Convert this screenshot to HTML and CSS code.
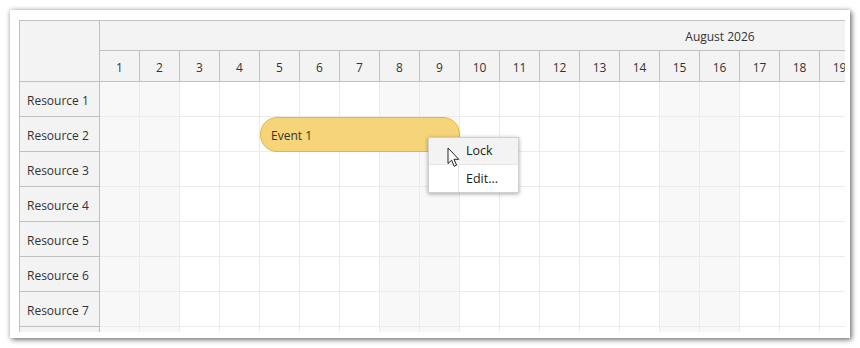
FILE: index.html
```html
<!DOCTYPE html>
<html>
<head>
<meta charset="utf-8">
<link rel="stylesheet" href="styles.css">
</head>
<body>
<div class="card">
  <div class="scheduler">
    <div class="left">
      <div class="corner"></div>
      <div class="res">Resource 1</div>
      <div class="res">Resource 2</div>
      <div class="res">Resource 3</div>
      <div class="res">Resource 4</div>
      <div class="res">Resource 5</div>
      <div class="res">Resource 6</div>
      <div class="res">Resource 7</div>
      <div class="res">Resource 8</div>
    </div>
    <div class="main">
      <div class="month"><span>August 2026</span></div>
      <div class="days">
        <div class="day">1</div><div class="day">2</div><div class="day">3</div><div class="day">4</div><div class="day">5</div><div class="day">6</div><div class="day">7</div><div class="day">8</div><div class="day">9</div><div class="day">10</div><div class="day">11</div><div class="day">12</div><div class="day">13</div><div class="day">14</div><div class="day">15</div><div class="day">16</div><div class="day">17</div><div class="day">18</div><div class="day">19</div><div class="day">20</div><div class="day">21</div><div class="day">22</div><div class="day">23</div><div class="day">24</div><div class="day">25</div><div class="day">26</div><div class="day">27</div><div class="day">28</div><div class="day">29</div><div class="day">30</div><div class="day">31</div>
      </div>
      <div class="canvas">
        <div class="col we"></div><div class="col we"></div><div class="col"></div><div class="col"></div><div class="col"></div><div class="col"></div><div class="col"></div><div class="col we"></div><div class="col we"></div><div class="col"></div><div class="col"></div><div class="col"></div><div class="col"></div><div class="col"></div><div class="col we"></div><div class="col we"></div><div class="col"></div><div class="col"></div><div class="col"></div><div class="col"></div><div class="col"></div><div class="col we"></div><div class="col we"></div><div class="col"></div><div class="col"></div><div class="col"></div><div class="col"></div><div class="col"></div><div class="col we"></div><div class="col we"></div><div class="col"></div>
        <div class="event">Event 1</div>
      </div>
    </div>
  </div>
</div>
<div class="menu">
  <div class="item hover"><span class="icon"></span><span class="label">Lock</span></div>
  <div class="item"><span class="icon"></span><span class="label">Edit...</span></div>
</div>
<svg class="cursor" width="14" height="21" viewBox="0 0 14 21">
  <path d="M1 1 L1 16.5 L4.6 13.2 L7.2 19.2 L9.6 18.2 L7 12.3 L11.8 12.3 Z" fill="#fff" stroke="#222" stroke-width="1" stroke-linejoin="round"/>
</svg>
</body>
</html>
```
FILE: styles.css
```css
html, body {
  margin: 0;
  padding: 0;
  background: #fff;
}
body {
  position: relative;
  width: 860px;
  height: 348px;
  overflow: hidden;
  font-family: "Open Sans", "Noto Sans", sans-serif;
  font-size: 12px;
  color: #333;
}
.card {
  position: absolute;
  left: 10px;
  top: 10px;
  width: 840px;
  height: 328px;
  box-sizing: border-box;
  padding: 10px 5px 6px 9px;
  background: #fff;
  box-shadow: 2px 2px 5px rgba(0,0,0,0.45), 0 0 5px rgba(0,0,0,0.25);
}
.scheduler {
  display: flex;
  width: 826px;
  height: 312px;
  box-sizing: border-box;
  border-left: 1px solid #c0c0c0;
  border-top: 1px solid #c0c0c0;
  overflow: hidden;
}
.left {
  flex: 0 0 80px;
  display: flex;
  flex-direction: column;
  background: #f3f3f3;
}
.corner {
  flex: 0 0 61px;
  box-sizing: border-box;
  border-right: 1px solid #c0c0c0;
  border-bottom: 1px solid #c0c0c0;
}
.res {
  flex: 0 0 35px;
  box-sizing: border-box;
  border-right: 1px solid #c0c0c0;
  border-bottom: 1px solid #c0c0c0;
  display: flex;
  align-items: center;
  padding-left: 7px;
  padding-top: 3px;
}
.main {
  flex: 0 0 1240px;
  display: flex;
  flex-direction: column;
}
.month {
  flex: 0 0 30px;
  box-sizing: border-box;
  background: #f3f3f3;
  border-bottom: 1px solid #c0c0c0;
  display: flex;
  align-items: center;
  justify-content: center;
  padding-top: 2px;
}
.days {
  flex: 0 0 31px;
  display: flex;
  background: #f3f3f3;
}
.day {
  flex: 0 0 40px;
  box-sizing: border-box;
  border-right: 1px solid #c0c0c0;
  border-bottom: 1px solid #c0c0c0;
  display: flex;
  align-items: center;
  justify-content: center;
  padding-top: 2px;
}
.canvas {
  position: relative;
  flex: 1 1 auto;
  display: flex;
}
.col {
  flex: 0 0 40px;
  box-sizing: border-box;
  border-right: 1px solid #ebebeb;
  background-image: repeating-linear-gradient(to bottom, transparent 0, transparent 34px, #ebebeb 34px, #ebebeb 35px);
}
.col.we {
  background-color: #f8f8f8;
}
.event {
  position: absolute;
  left: 160px;
  top: 35px;
  width: 200px;
  height: 35px;
  box-sizing: border-box;
  background: #f6d57a;
  border: 1px solid #e2b744;
  border-radius: 17px;
  display: flex;
  align-items: center;
  padding-left: 10px;
  padding-top: 1px;
  color: #333;
}
.menu {
  position: absolute;
  left: 428px;
  top: 137px;
  width: 91px;
  box-sizing: border-box;
  background: #fff;
  border: 1px solid #d0d0d0;
  box-shadow: 0 1px 4px rgba(0,0,0,0.35);
  display: flex;
  flex-direction: column;
  color: #222;
  font-size: 12.5px;
}
.item {
  display: flex;
  height: 26px;
  align-items: center;
}
.item.hover .label {
  padding-bottom: 2px;
}
.item + .item {
  border-top: 1px solid #e6e6e6;
  height: 27px;
}
.item.hover {
  background: #f3f3f3;
}
.icon {
  align-self: stretch;
  flex: 0 0 29px;
  border-right: 1px solid #e6e6e6;
}
.item.hover .icon {
  border-right-color: transparent;
}
.label {
  padding-left: 7px;
}
.cursor {
  position: absolute;
  left: 447px;
  top: 147px;
}
```
